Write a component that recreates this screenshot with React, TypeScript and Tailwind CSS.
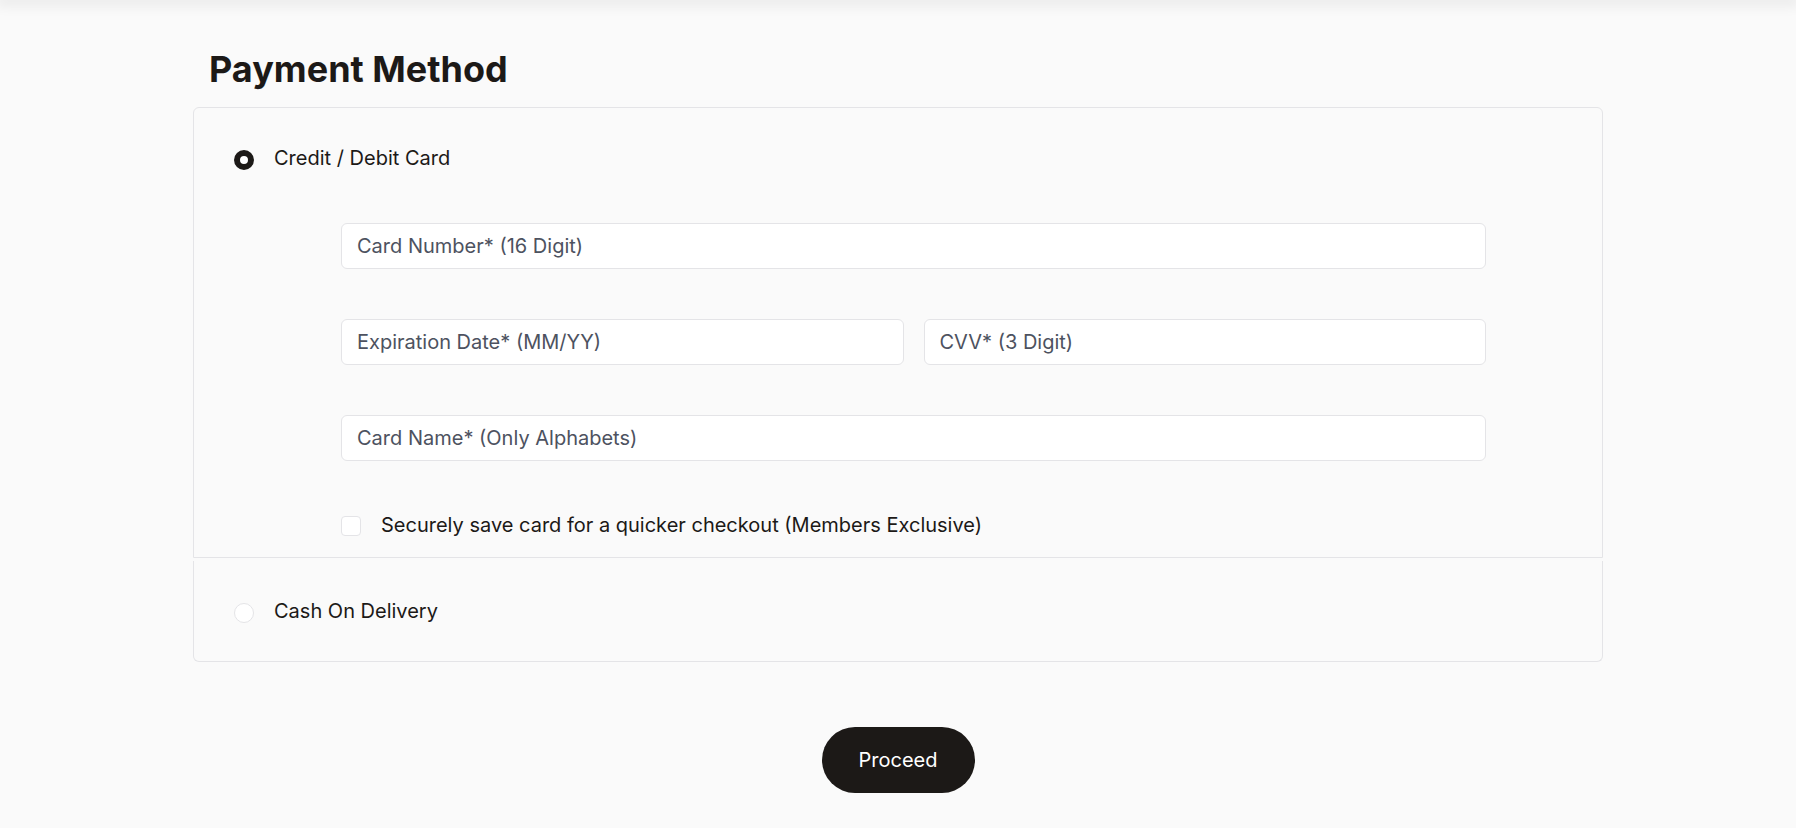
import React from "react";

function Radio({ checked }: { checked: boolean }) {
  return checked ? (
    <span className="block w-5 h-5 rounded-full border-[6px] border-[#1c1917] bg-white shrink-0" />
  ) : (
    <span className="block w-5 h-5 rounded-full border border-[#e4e4e7] bg-white shrink-0" />
  );
}

function Field({ placeholder, className = "" }: { placeholder: string; className?: string }) {
  return (
    <input
      type="text"
      placeholder={placeholder}
      className={`h-[46px] rounded-md border border-[#e4e4e7] bg-white pl-[15px] pr-4 text-[20px] text-[#1c1917] placeholder:text-[#4d5260] outline-none ${className}`}
    />
  );
}

export default function App() {
  return (
    <div
      className="min-h-screen flex flex-col bg-[#fafafa] text-[#1c1917]"
      style={{ fontFamily: "Inter, 'Noto Sans', sans-serif" }}
    >
      <div className="h-0 shrink-0 shadow-[0_0_14px_4px_rgba(0,0,0,0.10)]" />
      <div className="w-[1410px] mx-auto pt-[51px]">
        <h1 className="pl-4 text-[36px] leading-none font-bold text-[#1c1917]">
          Payment Method
        </h1>
        <div className="mt-[20px]">
          <div className="border border-[#e4e4e7] rounded-t-md pt-[42px] pb-[21px] px-10">
            <label className="flex items-start gap-5 h-5">
              <Radio checked />
              <span className="-mt-[4px] text-[20px] leading-6 text-[#1c1917]">Credit / Debit Card</span>
            </label>
            <div className="ml-[107px] w-[1145px] mt-[53px] flex flex-col gap-[50px]">
              <Field placeholder="Card Number* (16 Digit)" className="w-full" />
              <div className="flex gap-5">
                <Field placeholder="Expiration Date* (MM/YY)" className="flex-1 min-w-0" />
                <Field placeholder="CVV* (3 Digit)" className="flex-1 min-w-0" />
              </div>
              <Field placeholder="Card Name* (Only Alphabets)" className="w-full" />
            </div>
            <label className="ml-[107px] mt-[55px] flex items-start gap-5 h-5">
              <span className="block w-5 h-5 rounded-[4px] border border-[#e4e4e7] bg-white shrink-0" />
              <span className="-mt-[3px] text-[20px] leading-6 text-[#1c1917]">
                Securely save card for a quicker checkout (Members Exclusive)
              </span>
            </label>
          </div>
          <div className="mt-[3px] border-x border-b border-[#e4e4e7] rounded-b-md pt-[42px] pb-[38px] px-10">
            <label className="flex items-start gap-5 h-5">
              <Radio checked={false} />
              <span className="-mt-[4px] text-[20px] leading-6 text-[#1c1917]">Cash On Delivery</span>
            </label>
          </div>
        </div>
        <div className="flex justify-center mt-[65px]">
          <button className="h-[66px] w-[153px] rounded-full bg-[#1c1917] text-white text-[20px]">
            Proceed
          </button>
        </div>
      </div>
    </div>
  );
}
